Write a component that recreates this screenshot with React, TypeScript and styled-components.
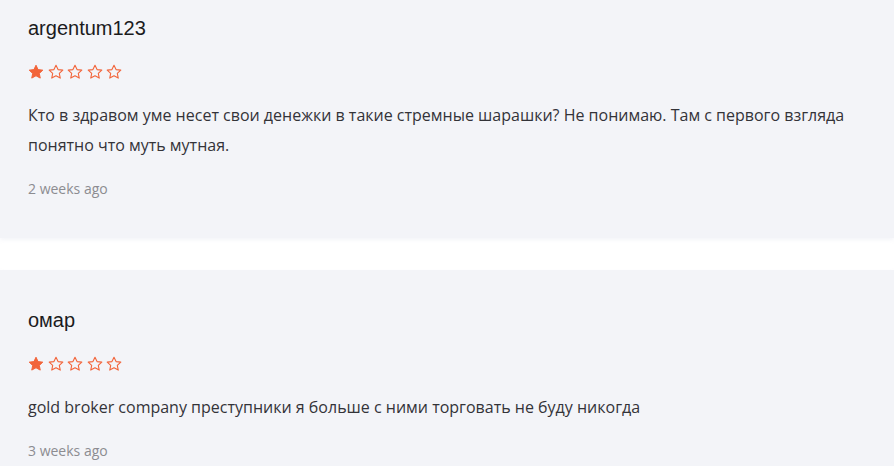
import React from 'react';
import styled, { createGlobalStyle } from 'styled-components';

const GlobalStyle = createGlobalStyle`
    html, body {
        margin: 0;
        padding: 0;
        background: #fff;
    }
`;

const ReviewList = styled.div`
    display: flex;
    flex-direction: column;
    gap: 32px;
    margin-top: -22px;
`;

const ReviewCard = styled.div`
    background: #f3f4f8;
    padding: 38px 28px 39px;
    box-shadow: 0 2px 4px rgba(243, 244, 248, 0.9);
`;

const Author = styled.div`
    font-family: "Liberation Sans", Arial, sans-serif;
    font-size: 20px;
    line-height: 24px;
    color: #1b1b1d;
`;

const Stars = styled.div`
    display: flex;
    gap: 3.5px;
    margin-top: 24px;
    height: 16px;
`;

const Body = styled.p`
    margin: 20px 0 0;
    font-family: "Open Sans", sans-serif;
    font-size: 16px;
    line-height: 30px;
    color: #333338;
`;

const Date = styled.div`
    margin-top: 19px;
    font-family: "Open Sans", sans-serif;
    font-size: 14px;
    line-height: 20px;
    color: #8c8c91;
`;

const STAR = 'M8 1.2l2.05 4.4 4.75.55-3.5 3.25.95 4.7L8 11.75 3.75 14.1l.95-4.7L1.2 6.15l4.75-.55z';

function Star({ filled }: { filled: boolean }) {
    return (
        <svg width="16" height="16" viewBox="0 0 16 16">
            <path d={STAR} fill={filled ? '#f2643a' : 'none'} stroke="#f2643a" strokeWidth={filled ? 1 : 1.1} strokeLinejoin="round" />
        </svg>
    );
}

const reviews = [
    {
        author: 'argentum123',
        rating: 1,
        text: 'Кто в здравом уме несет свои денежки в такие стремные шарашки? Не понимаю. Там с первого взгляда понятно что муть мутная.',
        date: '2 weeks ago',
    },
    {
        author: 'омар',
        rating: 1,
        text: 'gold broker company преступники я больше с ними торговать не буду никогда',
        date: '3 weeks ago',
    },
];

export default function App() {
    return (
        <>
            <GlobalStyle />
            <ReviewList>
                {reviews.map((r) => (
                    <ReviewCard key={r.author}>
                        <Author>{r.author}</Author>
                        <Stars>
                            {[0, 1, 2, 3, 4].map((i) => <Star key={i} filled={i < r.rating} />)}
                        </Stars>
                        <Body>{r.text}</Body>
                        <Date>{r.date}</Date>
                    </ReviewCard>
                ))}
            </ReviewList>
        </>
    );
}
